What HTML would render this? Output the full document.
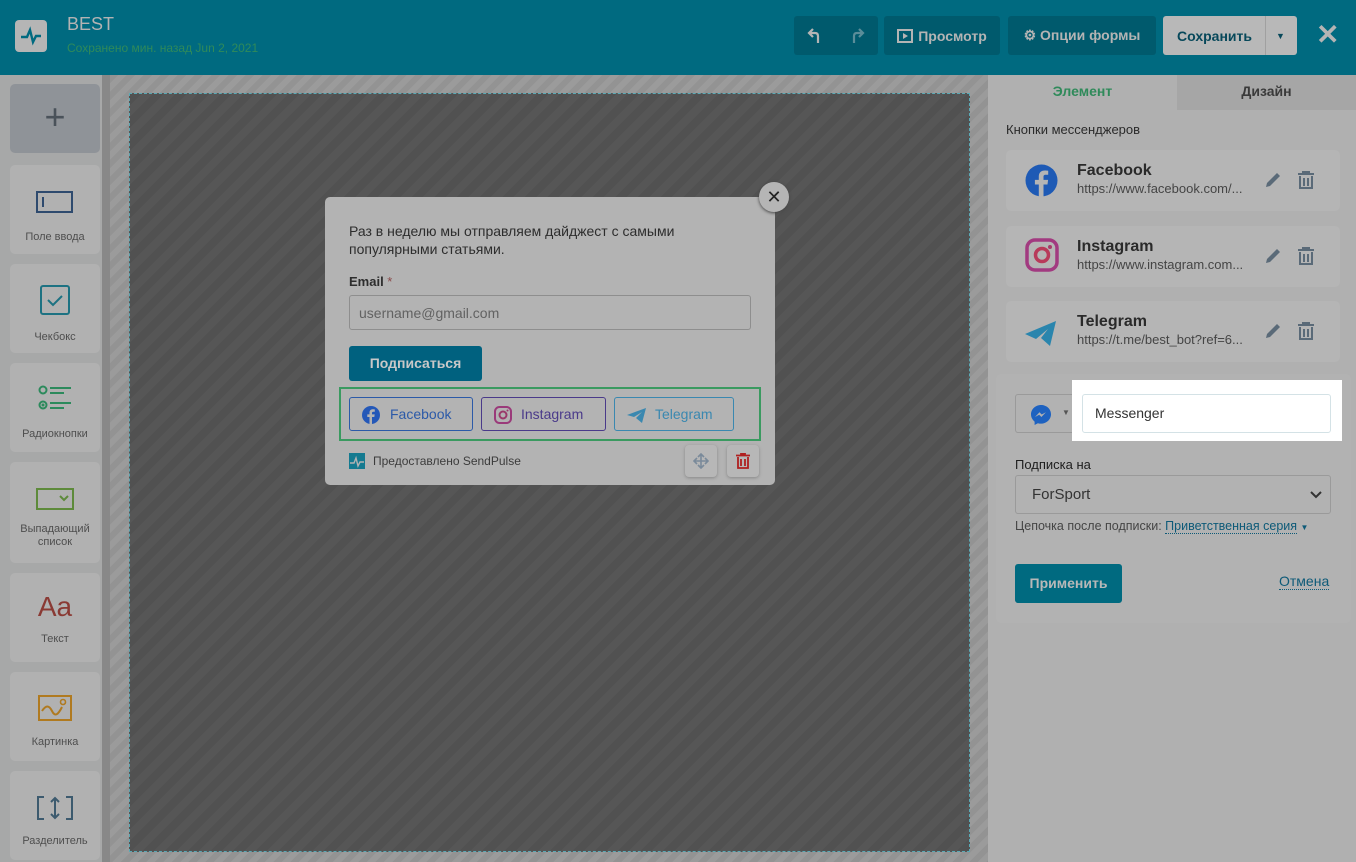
<!DOCTYPE html>
<html><head><meta charset="utf-8"><style>
*{box-sizing:border-box;margin:0;padding:0}
body{width:1356px;height:862px;overflow:hidden;font-family:"Liberation Sans",sans-serif;background:#a9a9a9;position:relative}
.hdr{position:absolute;left:0;top:0;width:1356px;height:75px;background:#006a80}
.logo{position:absolute;left:15px;top:20px;width:32px;height:32px;background:#b5b5b5;border-radius:4px}
.title{position:absolute;left:67px;top:14px;color:#b3b3b3;font-size:18px}
.saved{position:absolute;left:67px;top:41px;color:#2f8a5a;font-size:12px}
.btn{position:absolute;top:16px;height:39px;border-radius:3px;background:#005a6d;color:#b4b4b4;font-weight:bold;font-size:14px;display:flex;align-items:center;justify-content:center;gap:5px}
.side{position:absolute;left:0;top:75px;width:102px;height:787px;background:#a7a8a8}
.sb{position:absolute;left:102px;top:75px;width:8px;height:787px;background:#888}
.tool{position:absolute;left:10px;width:90px;background:#b1b1b1;border-radius:5px;text-align:center;color:#4e4e4e;font-size:11px}
.canvas{position:absolute;left:110px;top:75px;width:878px;height:787px;background:repeating-linear-gradient(135deg,#939393 0 6px,#9b9b9b 6px 12px)}
.inner{position:absolute;left:129px;top:93px;width:841px;height:759px;border:1px dashed #5aa9b5;background:repeating-linear-gradient(135deg,#515151 0 8px,#565656 8px 16px)}
.pop{position:absolute;left:325px;top:197px;width:450px;height:288px;background:#b3b3b3;border-radius:5px;color:#2d2d2d}
.rp{position:absolute;left:988px;top:75px;width:368px;height:787px;background:#b0b0b0}
.card{position:absolute;left:1006px;width:334px;height:61px;background:#b5b5b5;border-radius:5px}
.card b{position:absolute;left:71px;top:12px;font-size:16px;color:#2a2a2a}
.card span{position:absolute;left:71px;top:31px;font-size:13px;color:#454545}
.ed{position:absolute;left:258px;top:21px}
.tr{position:absolute;left:292px;top:21px}
</style></head><body>
<div class="hdr">
 <div class="logo"><svg width="32" height="32" viewBox="0 0 32 32"><path d="M6 17h6l3-7 3 12 3-6h5" stroke="#006a80" stroke-width="2.4" fill="none"/></svg></div>
 <div class="title">BEST</div>
 <div class="saved">Сохранено мин. назад Jun 2, 2021</div>
 <div class="btn" style="left:794px;width:84px;justify-content:space-around"><svg width="14" height="16"><path d="M11 15V8c0-2-1-3-3-3H3M6 1L2 5l4 4" stroke="#b4b4b4" stroke-width="2.2" fill="none"/></svg><svg width="14" height="16"><path d="M3 15V8c0-2 1-3 3-3h5M8 1l4 4-4 4" stroke="#5a8d99" stroke-width="2.2" fill="none"/></svg></div>
 <div class="btn" style="left:884px;width:116px"><svg width="16" height="14"><rect x="1" y="1" width="14" height="12" fill="none" stroke="#b4b4b4" stroke-width="2"/><path d="M6 4l5 3-5 3z" fill="#b4b4b4"/></svg>Просмотр</div>
 <div class="btn" style="left:1008px;width:148px">⚙ Опции формы</div>
 <div class="btn" style="left:1163px;width:134px;background:#b8b8b8;color:#07485a;justify-content:flex-start;padding-left:14px">Сохранить<span style="position:absolute;left:102px;top:0;width:1px;height:39px;background:#a0a0a0"></span><span style="position:absolute;left:113px;font-size:9px">▼</span></div>
 <div style="position:absolute;left:1316px;top:18px;color:#b4b4b4;font-size:28px;font-weight:bold">✕</div>
</div>
<div class="side"></div><div class="sb"></div>
<div class="tool" style="top:84px;height:69px;background:#8f9398;font-size:36px;color:#4a525a;line-height:66px">+</div>
<div class="tool" style="top:165px;height:89px"><svg width="38" height="24" style="margin-top:25px"><rect x="1" y="2" width="35" height="20" fill="none" stroke="#2e4a6e" stroke-width="2"/><path d="M7 7v10" stroke="#2e4a6e" stroke-width="2"/></svg><div style="margin-top:14px">Поле ввода</div></div>
<div class="tool" style="top:264px;height:89px"><svg width="32" height="32" style="margin-top:20px"><rect x="2" y="2" width="28" height="28" rx="2" fill="none" stroke="#1d7282" stroke-width="2"/><path d="M9 16l5 5 9-9" stroke="#1d7282" stroke-width="2" fill="none"/></svg><div style="margin-top:12px">Чекбокс</div></div>
<div class="tool" style="top:363px;height:89px"><svg width="34" height="26" style="margin-top:22px"><circle cx="5" cy="5" r="3.5" fill="none" stroke="#2c8a5c" stroke-width="2"/><circle cx="5" cy="20" r="3.5" fill="none" stroke="#2c8a5c" stroke-width="2"/><circle cx="5" cy="20" r="1.5" fill="#2c8a5c"/><path d="M12 3h21M12 8h14M12 18h21M12 23h14" stroke="#2c8a5c" stroke-width="2"/></svg><div style="margin-top:14px">Радиокнопки</div></div>
<div class="tool" style="top:462px;height:101px"><svg width="38" height="22" style="margin-top:26px"><rect x="1" y="1" width="36" height="20" fill="none" stroke="#5d8a3a" stroke-width="2"/><path d="M24 8l4 4 4-4" stroke="#5d8a3a" stroke-width="2" fill="none"/></svg><div style="margin-top:10px;line-height:13px">Выпадающий<br>список</div></div>
<div class="tool" style="top:573px;height:89px"><div style="margin-top:18px;font-size:28px;color:#8a3a34">Aa</div><div style="margin-top:10px">Текст</div></div>
<div class="tool" style="top:672px;height:89px"><svg width="34" height="26" style="margin-top:23px"><rect x="1" y="1" width="32" height="24" fill="none" stroke="#b07a20" stroke-width="2"/><path d="M4 16c4-6 7-6 10 0s6 4 10-4" stroke="#b07a20" stroke-width="2" fill="none"/><circle cx="25" cy="7" r="2.5" fill="none" stroke="#b07a20" stroke-width="1.6"/></svg><div style="margin-top:12px">Картинка</div></div>
<div class="tool" style="top:771px;height:89px"><svg width="38" height="26" style="margin-top:24px"><path d="M8 2H2v22h6M30 2h6v22h-6M19 3v20M15 7l4-4 4 4M15 19l4 4 4-4" stroke="#3c5a6e" stroke-width="2" fill="none"/></svg><div style="margin-top:11px">Разделитель</div></div>
<div class="canvas"></div><div class="inner"></div>
<div class="pop">
 <div style="position:absolute;left:24px;top:25px;font-size:14px;line-height:18px">Раз в неделю мы отправляем дайджест с самыми<br>популярными статьями.</div>
 <div style="position:absolute;left:24px;top:77px;font-size:13px;font-weight:bold">Email <span style="color:#8a4a4a;font-weight:normal">*</span></div>
 <div style="position:absolute;left:24px;top:98px;width:402px;height:35px;border:1px solid #8e8e8e;border-radius:3px;padding:9px;color:#626262;font-size:14px">username@gmail.com</div>
 <div style="position:absolute;left:24px;top:149px;width:133px;height:35px;background:#00617f;border-radius:3px;color:#c8c8c8;font-weight:bold;font-size:14px;text-align:center;line-height:35px">Подписаться</div>
 <div style="position:absolute;left:14px;top:190px;width:422px;height:54px;border:2px solid #3a9a60"></div>
 <div style="position:absolute;left:24px;top:200px;width:124px;height:34px;border:1px solid #2c5aa8;border-radius:3px;color:#2c5aa8;font-size:14px;line-height:32px;padding-left:40px">Facebook<svg style="position:absolute;left:12px;top:8px" width="18" height="18"><circle cx="9" cy="9" r="9" fill="#2458b8"/><path d="M10 18v-7h2.3l.4-2.6H10V7c0-.8.3-1.3 1.4-1.3h1.4V3.4c-.3 0-1.1-.1-2-.1-2 0-3.3 1.2-3.3 3.4v1.7H5.3V11h2.2v7z" fill="#b3b3b3"/></svg></div>
 <div style="position:absolute;left:156px;top:200px;width:125px;height:34px;border:1px solid #4a3a8a;border-radius:3px;color:#4a3a8a;font-size:14px;line-height:32px;padding-left:39px">Instagram<svg style="position:absolute;left:12px;top:8px" width="18" height="18"><rect x="1" y="1" width="16" height="16" rx="4.5" fill="none" stroke="#9a3a7a" stroke-width="2"/><circle cx="9" cy="9" r="3.5" fill="none" stroke="#9a3a6a" stroke-width="2"/><circle cx="13.5" cy="4.5" r="1" fill="#9a3a6a"/></svg></div>
 <div style="position:absolute;left:289px;top:200px;width:120px;height:34px;border:1px solid #3a88b0;border-radius:3px;color:#3a88b0;font-size:14px;line-height:32px;padding-left:40px">Telegram<svg style="position:absolute;left:12px;top:9px" width="20" height="16"><path d="M0 8l19-7-4 15-6-5 6-6-8 5z" fill="#3a88b0"/></svg></div>
 <svg style="position:absolute;left:24px;top:256px" width="16" height="16"><rect width="16" height="16" fill="#147a90"/><path d="M1 10h4l2-5 2 8 2-4h4" stroke="#b3b3b3" stroke-width="1.4" fill="none"/></svg>
 <div style="position:absolute;left:48px;top:257px;font-size:12px;color:#3c3c3c">Предоставлено SendPulse</div>
 <div style="position:absolute;left:360px;top:248px;width:32px;height:32px;background:#b7b7b7;border-radius:4px;box-shadow:0 1px 3px #888"><svg style="position:absolute;left:8px;top:8px" width="16" height="16"><path d="M8 1v14M1 8h14M5 4l3-3 3 3M5 12l3 3 3-3M4 5L1 8l3 3M12 5l3 3-3 3" stroke="#7a8a9a" stroke-width="1.6" fill="none"/></svg></div>
 <div style="position:absolute;left:402px;top:248px;width:32px;height:32px;background:#b7b7b7;border-radius:4px;box-shadow:0 1px 3px #888"><svg style="position:absolute;left:9px;top:8px" width="14" height="16"><path d="M0 2.5h14M5 2.5V0.8h4v1.7M2 4v11h10V4M5 6v7M9 6v7" stroke="#b02020" stroke-width="1.8" fill="none"/></svg></div>
</div>
<div style="position:absolute;left:759px;top:182px;width:30px;height:30px;border-radius:50%;background:#b5b5b5;box-shadow:0 1px 3px #444;text-align:center;line-height:30px;font-size:18px;color:#222">✕</div>
<div class="rp"></div>
<div style="position:absolute;left:1177px;top:75px;width:179px;height:35px;background:#a6a6a6"></div>
<div style="position:absolute;left:988px;top:83px;width:189px;text-align:center;color:#2f8a5a;font-weight:bold;font-size:14px">Элемент</div>
<div style="position:absolute;left:1177px;top:83px;width:179px;text-align:center;color:#3a3a3a;font-weight:bold;font-size:14px">Дизайн</div>
<div style="position:absolute;left:1006px;top:122px;font-size:13px;color:#2a2a2a">Кнопки мессенджеров</div>
<div class="card" style="top:150px"><svg style="position:absolute;left:19px;top:14px" width="33" height="33"><circle cx="16.5" cy="16.5" r="16" fill="#1e5ab5"/><path d="M18.5 33V20.5h4l.6-4.6h-4.6V13c0-1.3.4-2.2 2.3-2.2h2.4V6.7c-.4 0-1.9-.2-3.5-.2-3.5 0-5.9 2.1-5.9 6v3.4H9.9v4.6h3.9V33z" fill="#b5b5b5"/></svg><b>Facebook</b><span>https://www.facebook.com/...</span>
<svg class="ed" width="18" height="18"><path d="M2 16l1-4L13 2l3 3L6 15z" fill="#5a6a78"/></svg><svg class="tr" width="16" height="18"><path d="M0 3h16M5 3V1h6v2M2 5v12h12V5M6 7v8M10 7v8" stroke="#5a6a78" stroke-width="2" fill="none"/></svg></div>
<div class="card" style="top:226px"><svg style="position:absolute;left:19px;top:12px" width="34" height="34"><rect x="2" y="2" width="30" height="30" rx="8" fill="none" stroke="#a23a80" stroke-width="3.5"/><circle cx="17" cy="17" r="6.5" fill="none" stroke="#b83a5a" stroke-width="3.5"/><circle cx="25" cy="9" r="2" fill="#a83a6a"/></svg><b>Instagram</b><span>https://www.instagram.com...</span>
<svg class="ed" width="18" height="18"><path d="M2 16l1-4L13 2l3 3L6 15z" fill="#5a6a78"/></svg><svg class="tr" width="16" height="18"><path d="M0 3h16M5 3V1h6v2M2 5v12h12V5M6 7v8M10 7v8" stroke="#5a6a78" stroke-width="2" fill="none"/></svg></div>
<div class="card" style="top:301px"><svg style="position:absolute;left:19px;top:17px" width="32" height="28"><path d="M0 16l31-13-6 25-9-8 7-9-12 10z" fill="#2a85ad"/></svg><b>Telegram</b><span>https://t.me/best_bot?ref=6...</span>
<svg class="ed" width="18" height="18"><path d="M2 16l1-4L13 2l3 3L6 15z" fill="#5a6a78"/></svg><svg class="tr" width="16" height="18"><path d="M0 3h16M5 3V1h6v2M2 5v12h12V5M6 7v8M10 7v8" stroke="#5a6a78" stroke-width="2" fill="none"/></svg></div>
<div style="position:absolute;left:996px;top:374px;width:355px;height:249px;background:#b2b2b2;border-radius:5px"></div>
<div style="position:absolute;left:1015px;top:394px;width:80px;height:39px;border:1px solid #9a9a9a;border-radius:3px"><svg style="position:absolute;left:14px;top:9px" width="22" height="22"><path d="M11 1C5.5 1 1 5.2 1 10.4c0 2.9 1.4 5.4 3.6 7.2V21l3.3-1.8c1 .3 2 .4 3.1.4 5.5 0 10-4.2 10-9.4S16.5 1 11 1z" fill="#1e62c0"/><path d="M5 13l4.5-4.7 2.2 2.2 4.2-2.2-4.5 4.7-2.2-2.2z" fill="#b2b2b2"/></svg><span style="position:absolute;left:46px;top:13px;font-size:8px;color:#555">▼</span></div>
<div style="position:absolute;left:1072px;top:380px;width:270px;height:61px;background:#fff"></div>
<div style="position:absolute;left:1082px;top:394px;width:249px;height:39px;border:1px solid #d4e2e6;border-radius:3px;padding:10px 12px;font-size:14px;color:#333">Messenger</div>
<div style="position:absolute;left:1015px;top:457px;font-size:13px;color:#1e1e1e">Подписка на</div>
<div style="position:absolute;left:1015px;top:475px;width:316px;height:39px;border:1px solid #9a9a9a;border-radius:3px;padding:10px 16px;font-size:15px;color:#333">ForSport<svg style="position:absolute;right:8px;top:15px" width="12" height="8"><path d="M1 1l5 5 5-5" stroke="#333" stroke-width="2" fill="none"/></svg></div>
<div style="position:absolute;left:1015px;top:519px;font-size:12.5px;color:#454545">Цепочка после подписки: <span style="color:#0d5a78;border-bottom:1px dotted #0d5a78">Приветственная серия</span> <span style="color:#0d5a78;font-size:8px">▼</span></div>
<div style="position:absolute;left:1015px;top:564px;width:107px;height:39px;background:#006a80;border-radius:3px;color:#b8b8b8;font-weight:bold;font-size:14px;text-align:center;line-height:39px">Применить</div>
<div style="position:absolute;left:1279px;top:573px;font-size:14px;color:#0d5a78;border-bottom:1px dotted #0d5a78">Отмена</div>
</body></html>
